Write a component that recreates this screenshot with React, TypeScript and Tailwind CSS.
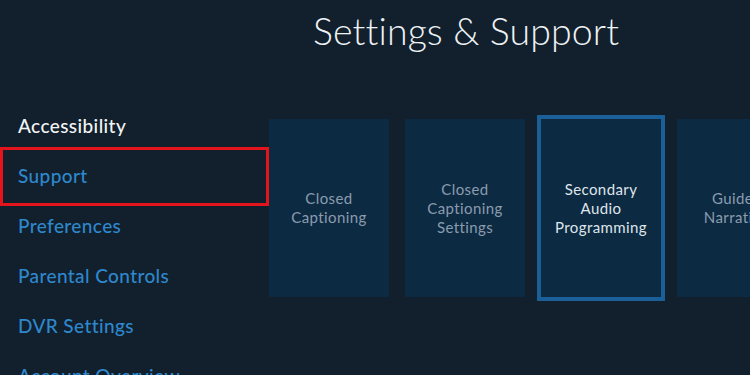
import React from "react";

const cards = [
  { lines: ["Closed", "Captioning"], selected: false },
  { lines: ["Closed", "Captioning", "Settings"], selected: false },
  { lines: ["Secondary", "Audio", "Programming"], selected: true },
  { lines: ["Guided", "Narration"], selected: false },
];

const menu = [
  { label: "Accessibility", active: true },
  { label: "Support", highlight: true },
  { label: "Preferences" },
  { label: "Parental Controls" },
  { label: "DVR Settings" },
  { label: "Account Overview" },
];

export default function App() {
  return (
    <div
      className="w-[750px] h-[375px] overflow-hidden bg-[#11202c] flex flex-col"
      style={{ fontFamily: "Lato, 'Open Sans', sans-serif" }}
    >
      <div className="h-[101px] pl-[313px] pt-[8px] shrink-0">
        <h1 className="text-[37.5px] font-light text-[#eef2f5] leading-[46px] tracking-[0.1px]">
          Settings &amp; Support
        </h1>
      </div>
      <div className="flex flex-1">
        <div className="w-[269px] shrink-0 flex flex-col">
          {menu.map((m) => (
            <div
              key={m.label}
              className="relative h-[50px] shrink-0 flex items-center pl-[18px]"
            >
              <span
                className={`text-[19px] font-medium tracking-[0.4px] ${
                  m.active ? "text-[#f2f4f6]" : "text-[#2f87cc]"
                }`}
              >
                {m.label}
              </span>
              {m.highlight && (
                <div className="absolute left-0 right-0 top-[-4px] bottom-[-5px] border-[3px] border-[#e3141b]" />
              )}
            </div>
          ))}
        </div>
        <div className="flex gap-4 pt-[18px]">
          {cards.map((c, i) => (
            <div
              key={i}
              className={`w-[120px] h-[178px] shrink-0 bg-[#0d2a43] flex flex-col items-center justify-center text-center ${
                c.selected
                  ? "outline-[4px] outline-solid outline-[#1b5f98] text-[#dfe5ea]"
                  : "text-[#8a9cad]"
              }`}
            >
              {c.lines.map((l) => (
                <div key={l} className="text-[15px] leading-[19px] tracking-[0.4px]">
                  {l}
                </div>
              ))}
            </div>
          ))}
        </div>
      </div>
    </div>
  );
}
